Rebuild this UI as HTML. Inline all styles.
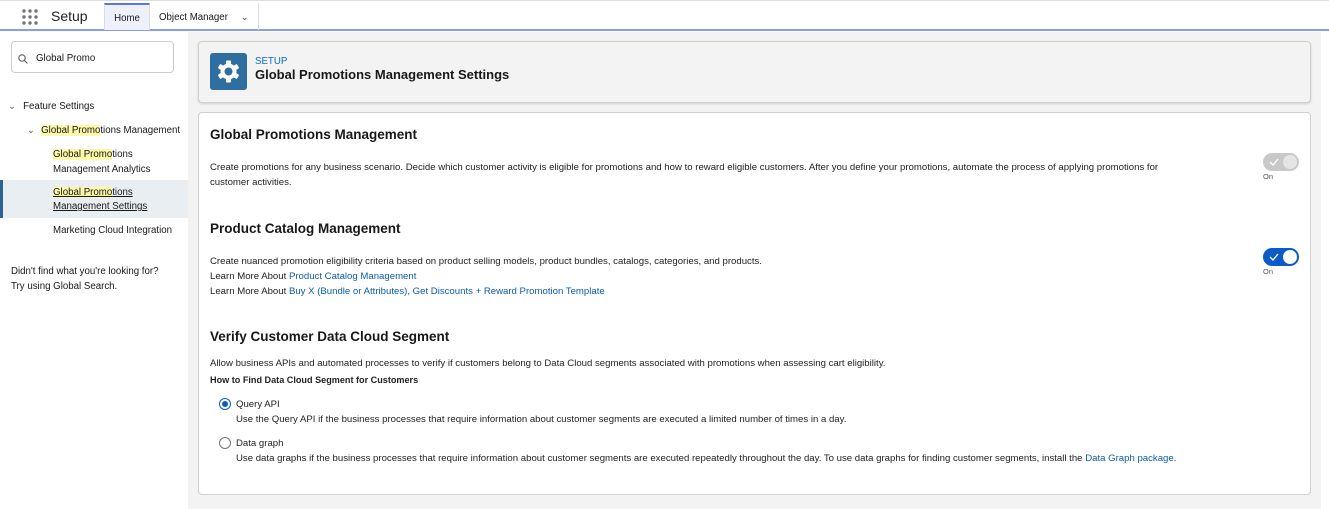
<!DOCTYPE html>
<html><head><style>
*{margin:0;padding:0;box-sizing:border-box}
body{width:1329px;height:509px;overflow:hidden;font-family:"Liberation Sans",sans-serif;color:#181818;background:#fff;position:relative;font-size:10px}
.abs{position:absolute;white-space:nowrap}
.top{position:absolute;left:0;top:0;width:1329px;height:31px;border-top:1px solid #ddd;border-bottom:2px solid #8a9cf2;background:#fff}
.side{position:absolute;left:0;top:32px;width:188px;height:477px;background:#fff}
.main{position:absolute;left:188px;top:32px;width:1133px;height:477px;background:#f3f3f3}
.card{position:absolute;background:#fff;border:1px solid #d0d0d0;border-radius:4px}
.hl{background:#fcf9a8}
a{color:#0b5cab;text-decoration:none}
h2{font-size:13.5px;font-weight:bold;position:absolute;white-space:nowrap}
.p{position:absolute;font-size:9.6px;line-height:15px;color:#222;white-space:nowrap}
.tog{position:absolute;width:36px;height:18px;border-radius:9px}
.tog i{position:absolute;right:2px;top:2px;width:14px;height:14px;border-radius:50%;background:#fff}
.tog svg{position:absolute;left:6px;top:5px}
.radio{position:absolute;width:12px;height:12px;border:1px solid #747474;border-radius:50%;background:#fff}
.s{font-size:9.7px}
</style></head><body>
<div class="top">
 <svg class="abs" style="left:22px;top:8px" width="16" height="16">
  <g fill="#747474"><circle cx="2" cy="2" r="1.7"/><circle cx="8" cy="2" r="1.7"/><circle cx="14" cy="2" r="1.7"/><circle cx="2" cy="8" r="1.7"/><circle cx="8" cy="8" r="1.7"/><circle cx="14" cy="8" r="1.7"/><circle cx="2" cy="14" r="1.7"/><circle cx="8" cy="14" r="1.7"/><circle cx="14" cy="14" r="1.7"/></g></svg>
 <div class="abs" style="left:51px;top:7px;font-size:14px;color:#222">Setup</div>
 <div class="abs" style="left:104px;top:2px;width:46px;height:27px;background:#eef1fb;border-top:2px solid #5a74e6;border-left:1px solid #ddd;border-right:1px solid #ddd;font-size:9.7px;text-align:center;padding-top:8px">Home</div>
 <div class="abs" style="left:150px;top:2px;width:109px;height:27px;border-right:1px solid #ddd;font-size:9.7px;padding:9px 0 0 9px">Object Manager <span style="margin-left:10px;color:#555">&#8964;</span></div>
</div>
<div class="side">
 <div class="abs" style="left:11px;top:9px;width:163px;height:32px;border:1px solid #ccc;border-radius:4px"></div>
 <svg class="abs" style="left:18px;top:22px" width="10" height="10"><circle cx="4" cy="4" r="3.2" fill="none" stroke="#666" stroke-width="1.2"/><line x1="6.4" y1="6.4" x2="9.5" y2="9.5" stroke="#666" stroke-width="1.2"/></svg>
 <div class="abs s" style="left:36px;top:21px">Global Promo</div>
 <div class="abs s" style="left:8px;top:69px"><span style="color:#666;margin-right:7px">&#8964;</span>Feature Settings</div>
 <div class="abs s" style="left:27px;top:93px"><span style="color:#666;margin-right:6px">&#8964;</span><span class="hl">Global Promo</span>tions Management</div>
 <div class="abs s" style="left:53px;top:115px;line-height:15px"><span class="hl">Global Promo</span>tions<br>Management Analytics</div>
 <div class="abs" style="left:0;top:148px;width:188px;height:38px;background:#e8eef2;border-left:3px solid #2a6496"></div>
 <div class="abs s" style="left:53px;top:154px;line-height:14px;text-decoration:underline"><span class="hl">Global Promo</span>tions<br>Management Settings</div>
 <div class="abs s" style="left:53px;top:193px">Marketing Cloud Integration</div>
 <div class="abs s" style="left:11px;top:232px;line-height:15px">Didn't find what you're looking for?<br>Try using Global Search.</div>
</div>
<div class="main">
 <div class="card" style="left:10px;top:9px;width:1113px;height:62px;background:#f3f3f3;box-shadow:0 1px 2px rgba(0,0,0,.15)">
  <div class="abs" style="left:11px;top:11px;width:37px;height:37px;background:#2e6fa0;border-radius:3px">
   <svg width="37" height="37" viewBox="0 0 37 37"><g transform="translate(18.5,18.5)" fill="#fff">
    <circle r="8"/><g><rect x="-2.5" y="-11" width="5" height="22" rx="1"/><rect x="-2.5" y="-11" width="5" height="22" rx="1" transform="rotate(60)"/><rect x="-2.5" y="-11" width="5" height="22" rx="1" transform="rotate(120)"/></g>
    <circle r="4" fill="#2e6fa0"/></g></svg>
  </div>
  <div class="abs" style="left:56px;top:14px;font-size:9.7px;color:#0b6bcb">SETUP</div>
  <div class="abs" style="left:56px;top:25px;font-size:13px;font-weight:bold">Global Promotions Management Settings</div>
 </div>
 <div class="card" style="left:10px;top:80px;width:1113px;height:383px">
  <h2 style="left:11px;top:14px">Global Promotions Management</h2>
  <div class="p" style="left:11px;top:47px">Create promotions for any business scenario. Decide which customer activity is eligible for promotions and how to reward eligible customers. After you define your promotions, automate the process of applying promotions for<br>customer activities.</div>
  <div class="tog" style="left:1064px;top:40px;background:#c9c9c9"><i style="background:#e5e5e5"></i><svg width="10" height="8"><path d="M1 4 L4 7 L9 1" fill="none" stroke="#fff" stroke-width="1.3"/></svg></div>
  <div class="abs" style="left:1064px;top:59px;font-size:7.5px;color:#555">On</div>
  <h2 style="left:11px;top:108px">Product Catalog Management</h2>
  <div class="p" style="left:11px;top:141px">Create nuanced promotion eligibility criteria based on product selling models, product bundles, catalogs, categories, and products.<br>Learn More About <a>Product Catalog Management</a><br>Learn More About <a>Buy X (Bundle or Attributes), Get Discounts + Reward Promotion Template</a></div>
  <div class="tog" style="left:1064px;top:135px;background:#0b5cc9"><i></i><svg width="10" height="8"><path d="M1 4 L4 7 L9 1" fill="none" stroke="#fff" stroke-width="1.3"/></svg></div>
  <div class="abs" style="left:1064px;top:154px;font-size:7.5px;color:#555">On</div>
  <h2 style="left:11px;top:216px">Verify Customer Data Cloud Segment</h2>
  <div class="p" style="left:11px;top:243px">Allow business APIs and automated processes to verify if customers belong to Data Cloud segments associated with promotions when assessing cart eligibility.</div>
  <div class="p" style="left:11px;top:260px;font-weight:bold;font-size:9.1px">How to Find Data Cloud Segment for Customers</div>
  <div class="radio" style="left:20px;top:285px;border-color:#0b5cc9"><div style="position:absolute;left:2px;top:2px;width:6px;height:6px;border-radius:50%;background:#0b5cc9"></div></div>
  <div class="p" style="left:37px;top:284px">Query API<br>Use the Query API if the business processes that require information about customer segments are executed a limited number of times in a day.</div>
  <div class="radio" style="left:20px;top:324px"></div>
  <div class="p" style="left:37px;top:323px">Data graph<br>Use data graphs if the business processes that require information about customer segments are executed repeatedly throughout the day. To use data graphs for finding customer segments, install the <a>Data Graph package</a>.</div>
 </div>
</div>
</body></html>
